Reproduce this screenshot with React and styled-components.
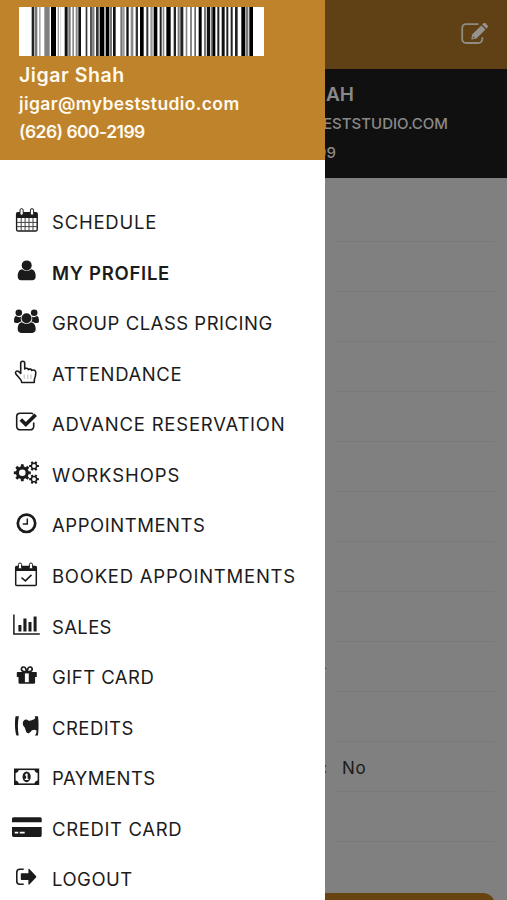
import React from "react";
import styled, { createGlobalStyle } from "styled-components";

const BARS = [
  [95, 8, "#222"], [105, 7, "#777"], [117, 5, "#aaa"], [133, 16, "#808080"],
  [153, 15, "#000"], [173, 4, "#999"], [181, 2, "#ccc"], [194, 9, "#111"],
  [205, 7, "#777"], [217, 5, "#888"], [227, 6, "#888"], [235, 8, "#111"],
  [257, 5, "#333"], [270, 8, "#555"], [280, 3, "#444"], [288, 8, "#333"],
  [299, 14, "#000"], [317, 11, "#000"], [330, 6, "#777"], [339, 8, "#111"],
  [361, 7, "#777"], [369, 5, "#999"], [379, 7, "#111"], [392, 8, "#888"],
  [407, 7, "#333"], [420, 11, "#000"], [439, 6, "#333"], [451, 7, "#999"],
  [461, 11, "#000"], [479, 6, "#222"], [488, 5, "#888"], [499, 13, "#000"],
  [521, 7, "#222"], [533, 6, "#777"], [541, 9, "#222"], [557, 5, "#888"],
  [570, 6, "#888"], [583, 5, "#666"], [596, 9, "#000"], [612, 7, "#777"],
  [621, 9, "#111"], [632, 4, "#777"], [637, 9, "#000"], [652, 6, "#222"],
  [665, 9, "#111"], [679, 6, "#222"], [692, 6, "#222"], [705, 8, "#222"],
  [724, 12, "#000"], [738, 7, "#777"], [748, 11, "#000"],
];

// one gear outline around cx, cy
const gear = (cx, cy, outer, inner, teeth) => {
  const points = [];
  for (let i = 0; i < teeth; i++) {
    const step = (Math.PI * 2) / teeth;
    const a = i * step;
    [
      [-0.3, inner],
      [-0.2, outer],
      [0.2, outer],
      [0.3, inner],
    ].forEach(([t, r]) => {
      const x = cx + Math.cos(a + t * step) * r;
      const y = cy + Math.sin(a + t * step) * r;
      points.push(`${x.toFixed(2)} ${y.toFixed(2)}`);
    });
  }
  return `M${points.join("L")}Z`;
};

const hole = (cx, cy, r) =>
  `M${cx - r} ${cy}a${r} ${r} 0 1 0 ${r * 2} 0a${r} ${r} 0 1 0 ${-r * 2} 0Z`;

const icons = {
  schedule: (
    <>
      <rect x="4.6" y="5.6" width="20.6" height="18.4" rx="1.6" fill="#fff" stroke="currentColor" strokeWidth="1.4" />
      <path d="M4.6 5.6h20.6v5.4H4.6z" />
      <path d="M9.2 11v13M13.1 11v13M17 11v13M21 11v13M5 15.4h20M5 19.6h20" stroke="#444" strokeWidth="1" />
      <rect x="8" y="1.6" width="3.2" height="6.6" rx="1.6" fill="#fff" stroke="currentColor" />
      <rect x="18.4" y="1.6" width="3.2" height="6.6" rx="1.6" fill="#fff" stroke="currentColor" />
    </>
  ),
  profile: (
    <>
      <circle cx="14.7" cy="7.4" r="5" />
      <path d="M10.3 11.2c2.6 2.2 6.2 2.2 8.800 0 3.200.2 4.500 3.200 4.600 7 0 2.600-1.300 4-3.400 4H9.100c-2.100 0-3.400-1.400-3.400-4 .1-3.800 1.400-6.800 4.600-7z" />
    </>
  ),
  group: (
    <>
      <circle cx="6.8" cy="4.8" r="3.300" />
      <circle cx="22.2" cy="4.8" r="3.300" />
      <path d="M4 8c1.800 1.400 4 1.400 5.400.6-1 1.700-.8 3.600.2 5.100-1.600 0-2.600.4-3.400 1.300H4c-1.400 0-2-.8-2-2C2 10.500 2.500 8.400 4 8zM25 8c-1.800 1.400-4 1.400-5.400.6 1 1.700.8 3.600-.2 5.100 1.600 0 2.600.4 3.400 1.300H25c1.400 0 2-.8 2-2 0-2.500-.5-4.600-2-5z" />
      <circle cx="14.500" cy="10.200" r="5" />
      <path d="M10.100 14.200c2.600 2 6.200 2 8.800 0 3.300.2 4.700 3.200 4.800 6.900 0 2.500-1.300 3.800-3.400 3.800H9.100c-2.100 0-3.400-1.300-3.400-3.800.1-3.700 1.100-6.700 4.400-6.900z" />
    </>
  ),
  attendance: (
    <>
      <path
        d="M8.700 14.500V4.200c0-2.600 4-2.600 4 0v5.700c1-1 3.300-.8 3.600.7 1-.9 3-.6 3.500.8 1.800-.9 4 0 4 2.200 0 3-.6 4.700-1.300 6.400-.3.800-.2 1.200-.2 3.500H9.700c0-2.200-1.200-3.300-3-5.300l-2.900-3.300c-1.200-2.400 1.300-3.700 2.900-2.200z"
        fill="none"
        stroke="currentColor"
        strokeWidth="1.600"
        strokeLinejoin="round"
      />
      <path d="M12.200 15.500v4.500M15.700 15.500v4.500M19 15.500v4.500" stroke="#aaa" strokeWidth="0.800" />
    </>
  ),
  advance: (
    <>
      <path d="M20.500 4.600a4 4 0 0 0-1.300-.3H8A3.300 3.300 0 0 0 4.700 7.600v9.900a3.300 3.300 0 0 0 3.300 3.300h10.400a3.300 3.300 0 0 0 3.300-3.300v-3.500" fill="none" stroke="currentColor" strokeWidth="1.600" strokeLinecap="round" />
      <path d="M8.800 10.500l5 5L23.700 5.700" fill="none" stroke="currentColor" strokeWidth="3.700" />
    </>
  ),
  workshops: (
    <path
      fillRule="evenodd"
      d={
        gear(10.3, 12.8, 8.6, 6.5, 8) + hole(10.3, 12.8, 3.3) +
        gear(22, 6, 5, 3.5, 6) + hole(22, 6, 1.9) +
        gear(22, 19.2, 5, 3.5, 6) + hole(22, 19.2, 1.9)
      }
    />
  ),
  appointments: (
    <g fill="none" stroke="currentColor">
      <circle cx="14.500" cy="13.300" r="8.700" strokeWidth="2.700" />
      <path d="M15.300 8.400v5.700h-4.500" strokeWidth="1.500" />
    </g>
  ),
  booked: (
    <>
      <rect x="3.700" y="5.400" width="20.600" height="19" rx="1" fill="none" stroke="currentColor" strokeWidth="1.500" />
      <path d="M3.700 5.400h20.600V10H3.700z" />
      <rect x="6.400" y="2" width="3.200" height="6" rx="1.600" fill="#fff" stroke="currentColor" />
      <rect x="17.400" y="2" width="3.200" height="6" rx="1.600" fill="#fff" stroke="currentColor" />
      <path d="M9.500 16.700l3.900 3.200 6.100-6" fill="none" stroke="currentColor" strokeWidth="1.500" />
    </>
  ),
  sales: (
    <>
      <path d="M1.900 2.600v19.300h25.900" fill="none" stroke="currentColor" strokeWidth="1.500" />
      <path d="M6.400 12.900h3v6.600h-3zM11.400 6.400h3.100v13.100h-3.100zM16.500 9.900h3v9.600h-3zM21.600 4.400h3v15.100h-3z" />
    </>
  ),
  gift: (
    <>
      <path d="M14.600 10c-2.500-.2-5.200-.3-5.200-2.700 0-2.800 3.400-3 4.300-.8zM15 10c2.500-.2 5.200-.3 5.200-2.700 0-2.800-3.400-3-4.300-.8z" fill="none" stroke="currentColor" strokeWidth="1.700" />
      <path d="M5.600 9.900H24q.8 0 .8.800v4.200H4.800v-4.200q0-.8.800-.8z" />
      <path d="M6.500 14.300h16.600v6.100q0 1.400-1.400 1.400H7.900q-1.400 0-1.400-1.400z" />
      <path d="M12.900 11.400h3.900v8.800h-3.900z" fill="#fff" />
    </>
  ),
  credits: (
    <>
      <path d="M3.600 3.300h3.300C5.700 9 5.500 16 6.700 22.500H4.500C2.800 19 2.600 7 3.600 3.300z" />
      <path d="M22.800 3.300h3.100c1 4 .8 15.800 0 19.200h-3.200c1.500-1.400 2-3.200 1.800-5-2.500-1.400-4.500-.5-5.600 1-1.500 2-3.300 2.200-4.300 1-1.200-1.800-1-3.700-2.200-5.400-1-1.300-1.600-2-1.600-3.900.2-3.800 3.500-4.500 5.500-2.800 1.800 1 3.600-.4 5.400-.8 1.500-.4 1.900-1.700 1.100-3.300z" />
    </>
  ),
  payments: (
    <>
      <rect x="2.800" y="6.300" width="23.600" height="14.900" fill="none" stroke="currentColor" strokeWidth="1.600" />
      <path d="M3 6.500h3.800q-.3 3.300-3.800 3.500zM26.200 6.500h-3.800q.3 3.300 3.800 3.500zM3 21h3.800q-.3-3.300-3.800-3.500zM26.200 21h-3.800q.3-3.300 3.800-3.500z" />
      <ellipse cx="14.600" cy="13.800" rx="4.100" ry="5.400" />
      <path d="M12.900 12.100l1.500-1.600h1.200v5.300h1.100V17h-3.900v-1.200h1.300v-3.500l-.8.700z" fill="#fff" />
    </>
  ),
  creditCard: (
    <>
      <path d="M1.500 3.200h26.700q1.500 0 1.500 1.600v3.500H0V4.800q0-1.600 1.500-1.600z" />
      <path d="M0 13h29.700v8.300q0 1.600-1.500 1.600H1.500Q0 22.900 0 21.300zm2.700 4.800v1.700h3.500v-1.700zm5 0v1.700h5v-1.700z" fillRule="evenodd" />
    </>
  ),
  logout: (
    <>
      <path d="M11.700 5.200H7.800a3 3 0 0 0-3 3v9.100a3 3 0 0 0 3 3h3.900" fill="none" stroke="currentColor" strokeWidth="1.600" />
      <path d="M9.600 9.300h6.800V5.600q0-1.200 1-.5l6.600 7q.7.700 0 1.400l-6.600 7q-1 .7-1-.5v-3.900H9.600q-.8 0-.8-.8v-5.200q0-.8.800-.8z" />
    </>
  ),
};

const MENU = [
  { icon: "schedule", label: "SCHEDULE", spacing: 0.76 },
  { icon: "profile", label: "MY PROFILE", spacing: 0.72, active: true },
  { icon: "group", label: "GROUP CLASS PRICING", spacing: 0.5 },
  { icon: "attendance", label: "ATTENDANCE", spacing: 0.6 },
  { icon: "advance", label: "ADVANCE RESERVATION", spacing: 0.77 },
  { icon: "workshops", label: "WORKSHOPS", spacing: 0.93 },
  { icon: "appointments", label: "APPOINTMENTS", spacing: 0.54 },
  { icon: "booked", label: "BOOKED APPOINTMENTS", spacing: 0.76 },
  { icon: "sales", label: "SALES", spacing: 0.35 },
  { icon: "gift", label: "GIFT CARD", spacing: 0.48 },
  { icon: "credits", label: "CREDITS", spacing: 0.45 },
  { icon: "payments", label: "PAYMENTS", spacing: 0.45 },
  { icon: "creditCard", label: "CREDIT CARD", spacing: 0.65 },
  { icon: "logout", label: "LOGOUT", spacing: 0.5 },
];

const FIELDS = [{}, {}, {}, {}, {}, {}, {}, {}, {}, { mark: "-" }, {}, { mark: ":", value: "No" }, {}];

const Barcode = () => (
  <BarcodeSvg viewBox="57 0 735 147" preserveAspectRatio="none">
    <rect x="57" width="735" height="147" fill="#fff" />
    {BARS.map(([x, width, fill]) => (
      <rect key={x} x={x} width={width} height="147" fill={fill} />
    ))}
  </BarcodeSvg>
);

const EditIcon = () => (
  <EditSvg viewBox="0 0 28 24">
    <path d="M17.500 2.100H5A3.800 3.800 0 0 0 1.200 5.900v11.300A3.800 3.800 0 0 0 5 21h12.500a3.800 3.800 0 0 0 3.800-3.800v-2" fill="none" stroke="#908b83" strokeWidth="1.800" />
    <path d="M10.300 17.600l.8-5L20.300 3.400l4.200 4.100-9.300 9.300z" fill="#96928d" />
    <path d="M21.200 2.500l1.400-1.300q.9-.8 1.800 0l2.200 2.200q.8.900 0 1.800l-1.300 1.400z" fill="#96928d" />
    <path d="M11.900 14l1.900 1.900-1.600.3z" fill="#604115" />
  </EditSvg>
);

const App = () => {
  return (
    <>
      <GlobalStyle />
      <Screen>
        <Page>
          <TopBar>
            <EditIcon />
          </TopBar>
          <Summary>
            <SummaryName>JIGAR SHAH</SummaryName>
            <SummaryEmail>JIGAR@MYBESTSTUDIO.COM</SummaryEmail>
            <SummaryPhone>(626) 600-2199</SummaryPhone>
          </Summary>
          <Fields>
            {FIELDS.map(({ mark, value }, i) => (
              <Field key={i}>
                <FieldMark>{mark}</FieldMark>
                <FieldValue>{value}</FieldValue>
              </Field>
            ))}
          </Fields>
          <SaveButton />
        </Page>
        <Drawer>
          <Account>
            <Barcode />
            <AccountName>Jigar Shah</AccountName>
            <AccountLine $spacing={0.38}>jigar@mybeststudio.com</AccountLine>
            <AccountLine $spacing={-0.55}>(626) 600-2199</AccountLine>
          </Account>
          <Menu>
            {MENU.map(({ icon, label, spacing, active }) => (
              <MenuItem key={label}>
                <MenuIcon viewBox="0 0 30 30">{icons[icon]}</MenuIcon>
                <MenuLabel $spacing={spacing} $active={active}>
                  {label}
                </MenuLabel>
              </MenuItem>
            ))}
          </Menu>
        </Drawer>
      </Screen>
    </>
  );
};

export default App;

const GlobalStyle = createGlobalStyle`
  * {
    box-sizing: border-box;
  }

  body {
    margin: 0;
    font-family: Inter, "Open Sans", sans-serif;
    color: #1c1b1c;
  }
`;

const Screen = styled.div`
  position: relative;
  width: 507px;
  height: 900px;
  overflow: hidden;
`;

const Page = styled.main`
  height: 100%;
  background: #808080;
`;

const TopBar = styled.header`
  display: flex;
  justify-content: flex-end;
  height: 69px;
  padding: 21.5px 18px 0 0;
  background: #604115;
`;

const EditSvg = styled.svg`
  width: 28px;
  height: 24px;
`;

const Summary = styled.section`
  display: flex;
  flex-direction: column;
  height: 109px;
  padding-top: 11px;
  background: #111010;
  color: #8a8989;
  text-align: right;
  white-space: nowrap;
`;

const SummaryName = styled.div`
  width: 354px;
  font-size: 19px;
  font-weight: 600;
  line-height: 29px;
`;

const SummaryEmail = styled.div`
  width: 448px;
  font-size: 15px;
  font-weight: 500;
  line-height: 30px;
`;

const SummaryPhone = styled.div`
  width: 336px;
  font-size: 15px;
  font-weight: 500;
  line-height: 27px;
`;

const Fields = styled.div`
  display: flex;
  flex-direction: column;
  padding: 14px 12px 0 313px;
`;

const Field = styled.div`
  display: flex;
  align-items: center;
  height: 50px;
`;

const FieldMark = styled.span`
  width: 14px;
  font-size: 15px;
  color: #333;
  text-align: right;
`;

const FieldValue = styled.span`
  display: flex;
  flex: 1;
  align-items: center;
  height: 50px;
  margin-left: 8px;
  padding: 2px 0 0 7px;
  border-bottom: 1px solid #797979;
  font-size: 17px;
  letter-spacing: 0.8px;
`;

const SaveButton = styled.div`
  height: 50px;
  margin: 51px 12px 0;
  border-radius: 12px;
  background: #66430f;
`;

const Drawer = styled.aside`
  position: absolute;
  top: 0;
  left: 0;
  width: 325px;
  height: 100%;
  background: #fff;
`;

const Account = styled.div`
  height: 159.5px;
  padding: 7px 0 0 19px;
  background: #be832b;
  color: #fffaf0;
`;

const BarcodeSvg = styled.svg`
  display: block;
  width: 245px;
  height: 49px;
`;

const AccountName = styled.div`
  margin-top: 4px;
  font-size: 19.5px;
  font-weight: 600;
  letter-spacing: 0.55px;
  line-height: 30px;
`;

const AccountLine = styled.div`
  font-size: 17.5px;
  font-weight: 600;
  letter-spacing: ${({ $spacing }) => $spacing}px;
  line-height: 28px;
`;

const Menu = styled.ul`
  margin: 0;
  padding: 37.3px 0 0 12px;
  list-style: none;
`;

const MenuItem = styled.li`
  display: flex;
  align-items: center;
  height: 50.57px;
`;

const MenuIcon = styled.svg`
  flex: none;
  width: 30px;
  height: 30px;
  fill: currentColor;
`;

const MenuLabel = styled.span`
  margin-left: 10px;
  font-size: 18.5px;
  font-weight: ${({ $active }) => ($active ? 600 : 400)};
  letter-spacing: ${({ $spacing }) => $spacing}px;
  white-space: nowrap;
`;
